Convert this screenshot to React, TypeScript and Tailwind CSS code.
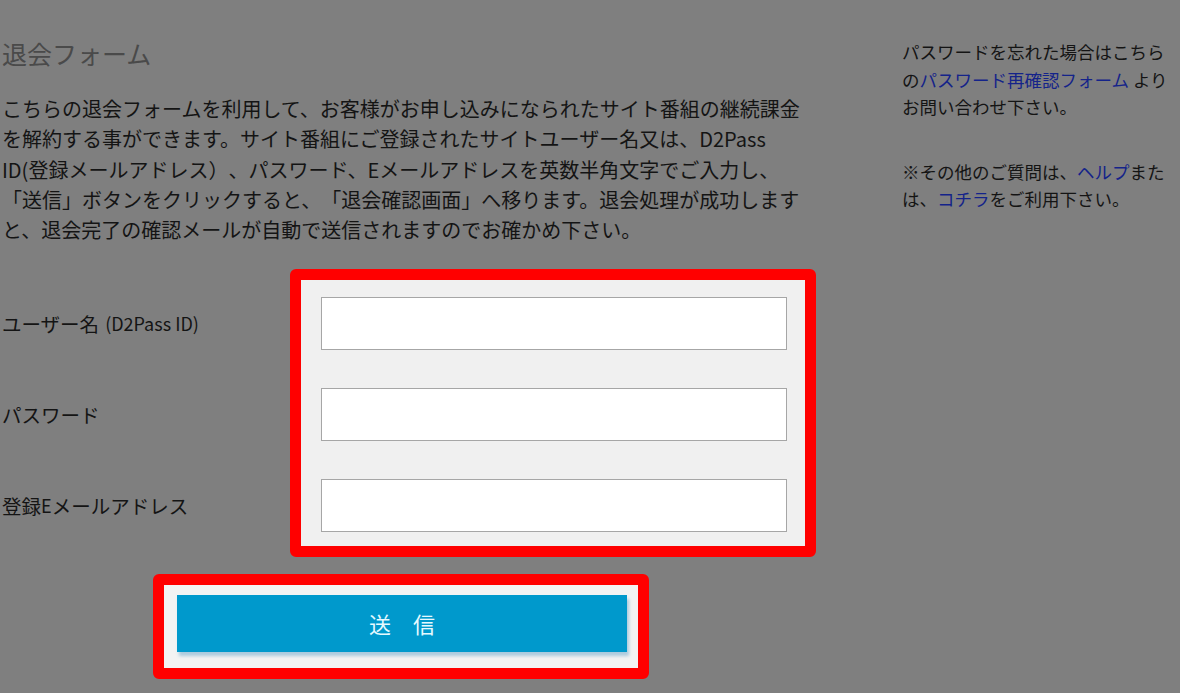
const font = { fontFamily: '"Noto Sans CJK JP", "Noto Sans", sans-serif' };

const fields = ["user", "password", "email"];

function Labels() {
  return (
    <div className="flex w-[288px] flex-col gap-[38px] pt-[28px] text-[19.5px] text-[#141414]">
      <div className="flex h-[53px] items-center whitespace-nowrap">
        ユーザー名<span className="ml-[6px] text-[18px]">(D2Pass ID)</span>
      </div>
      <div className="flex h-[53px] items-center whitespace-nowrap">パスワード</div>
      <div className="flex h-[53px] items-center whitespace-nowrap">
        登録<span className="text-[18px]">E</span>メールアドレス
      </div>
    </div>
  );
}

export default function App() {
  return (
    <div className="h-[693px] w-[1180px] overflow-hidden bg-[#7f7f7f] [text-spacing-trim:space-all]" style={font}>
      <div className="flex pl-[2px] pt-[35px]">
        <div className="w-[900px] shrink-0">
          <h1 className="text-[25px] leading-[36px] text-[#4a4a4a]">退会フォーム</h1>

          <div className="mt-[23px] whitespace-nowrap text-[20px] leading-[30.3px] text-[#141414]">
            <div>こちらの退会フォームを利用して、お客様がお申し込みになられたサイト番組の継続課金</div>
            <div>を解約する事ができます。サイト番組にご登録されたサイトユーザー名又は、D2Pass</div>
            <div>ID(登録メールアドレス）、パスワード、Eメールアドレスを英数半角文字でご入力し、</div>
            <div>「送信」ボタンをクリックすると、「退会確認画面」へ移ります。退会処理が成功します</div>
            <div>と、退会完了の確認メールが自動で送信されますのでお確かめ下さい。</div>
          </div>

          <div className="mt-[24px] flex">
            <Labels />
            <div className="w-[526px] rounded-[6px] border-[11px] border-[#ff0000] bg-[#f0f0f0] pb-[14px] pl-[20px] pr-[18px] pt-[17px]">
              <div className="flex flex-col gap-[38px]">
                {fields.map((f) => (
                  <input
                    key={f}
                    type={f === "password" ? "password" : "text"}
                    className="h-[53px] w-full border border-[#a6a6a6] bg-white outline-none"
                  />
                ))}
              </div>
            </div>
          </div>

          <div className="ml-[151px] mt-[17px] w-[496px] rounded-[6px] border-[11px] border-[#ff0000] bg-[#f3f3f3] pb-[16px] pl-[13px] pr-[11px] pt-[10px]">
            <button
              type="button"
              className="flex h-[57px] w-[450px] items-center justify-center bg-[#0099cc] text-[22px] text-[#e6f9ff] shadow-[2px_4px_3px_rgba(40,130,180,0.35)]"
            >
              送　信
            </button>
          </div>
        </div>

        <div className="w-[278px] pt-[3px] text-[17.5px] leading-[27.5px] text-[#141414]">
          <div className="whitespace-nowrap">パスワードを忘れた場合はこちら</div>
          <div className="whitespace-nowrap">
            の<span className="text-[#14238a]">パスワード再確認フォーム</span> より
          </div>
          <div className="whitespace-nowrap">お問い合わせ下さい。</div>
          <div className="mt-[37px] whitespace-nowrap">
            ※その他のご質問は、<span className="text-[#14238a]">ヘルプ</span>また
          </div>
          <div className="whitespace-nowrap">
            は、<span className="text-[#14238a]">コチラ</span>をご利用下さい。
          </div>
        </div>
      </div>
    </div>
  );
}
